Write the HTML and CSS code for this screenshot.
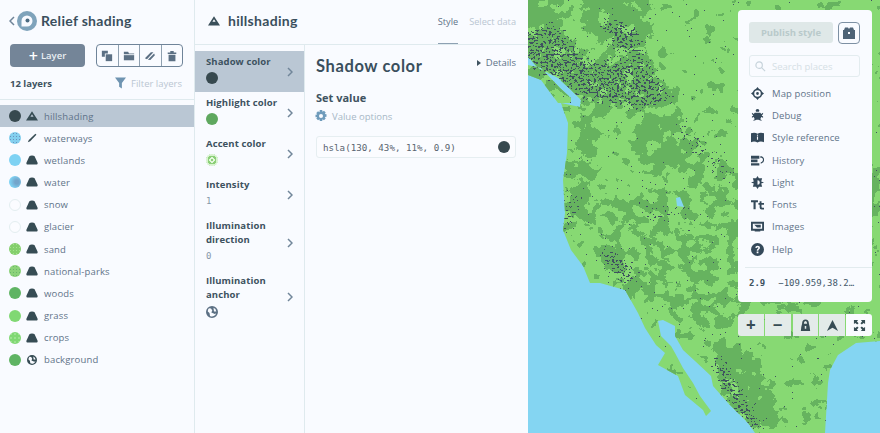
FILE: index.html
```html
<!DOCTYPE html>
<html lang="en">
<head>
<meta charset="utf-8">
<title>Relief shading</title>
<link rel="stylesheet" href="styles.css">
</head>
<body>
<svg class="defs" width="0" height="0" aria-hidden="true">
  <symbol id="hill" viewBox="0 0 12 10"><path d="M3.400 1.200Q4 .4 6 .4t2.600.8l3 6.600Q12 9.400 10.800 9.400H1.200Q0 9.400.4 7.800z"/></symbol>
  <symbol id="hill2" viewBox="0 0 12 10"><path d="M6 .3l6 9.200H0zM6 3.200L4.400 5.700h3.200z" fill-rule="evenodd"/></symbol>
  <symbol id="line" viewBox="0 0 12 12"><path d="M10 .8l1.300 1.300-7.500 7.800-2.800 1.300 1.200-2.800z"/></symbol>
  <symbol id="globe" viewBox="0 0 12 12"><path fill-rule="evenodd" d="M6 0a6 6 0 1 0 0 12A6 6 0 0 0 6 0zM3 2.200l2 .3 1.300 2-1 2 3.500 1.500 1.400-.7A4.300 4.300 0 0 1 4 9.900L3.500 7 1.800 5.500A4.300 4.300 0 0 1 3 2.200zm4.500-.4a4.300 4.300 0 0 1 2.800 3.600L8 5.500z"/></symbol>
</svg>
<div class="app">
  <aside class="sidebar">
    <header class="brand">
      <svg class="back" viewBox="0 0 6 10"><path d="M5 1L1 5l4 4"/></svg>
      <svg class="logo" viewBox="0 0 20 20"><circle cx="10" cy="10" r="10" fill="#7fa3bb"/><path d="M10 4.500a5.500 5.500 0 0 1 0 11H4.500V10A5.500 5.500 0 0 1 10 4.500z" fill="#f8faff"/><circle cx="10.500" cy="9.500" r="2" fill="#4a6a80"/></svg>
      <h1>Relief shading</h1>
    </header>
    <div class="toolbar">
      <button class="add-layer"><span class="plus">+</span>Layer</button>
      <div class="tools">
        <span class="tool"><svg viewBox="0 0 14 14"><path d="M1 1h7v3H4.500v4H1z"/><path d="M5.500 5H13v8H5.500z"/></svg></span>
        <span class="tool"><svg viewBox="0 0 14 14"><path d="M1 2h5l1 2h6v1H1z"/><path d="M1 6h12v6H1z"/></svg></span>
        <span class="tool"><svg viewBox="0 0 14 14"><path d="M1 9.500L8 2.500l3 .2L3.500 10.800zM4.500 11.500l7.300-7.500.9 2.200-5.300 5.500z"/></svg></span>
        <span class="tool"><svg viewBox="0 0 14 14"><path d="M2 3h10v1.800H2zM5 1.200h4V3H5zM3 5.500h8V13H3z"/></svg></span>
      </div>
    </div>
    <div class="counts">
      <strong>12 layers</strong>
      <span class="filter"><svg viewBox="0 0 12 12"><path d="M0 0h12L7.500 6v6l-3-1.800V6z"/></svg>Filter layers</span>
    </div>
    <ul class="layers">
      <li class="layer active"><i class="dot c-dark"></i><svg class="ico"><use href="#hill2"/></svg>hillshading</li>
      <li class="layer"><i class="dot c-stip"></i><svg class="ico"><use href="#line"/></svg>waterways</li>
      <li class="layer"><i class="dot c-blue"></i><svg class="ico"><use href="#hill"/></svg>wetlands</li>
      <li class="layer"><i class="dot c-blue2"></i><svg class="ico"><use href="#hill"/></svg>water</li>
      <li class="layer"><i class="dot c-white"></i><svg class="ico"><use href="#hill"/></svg>snow</li>
      <li class="layer"><i class="dot c-white"></i><svg class="ico"><use href="#hill"/></svg>glacier</li>
      <li class="layer"><i class="dot c-mottle"></i><svg class="ico"><use href="#hill"/></svg>sand</li>
      <li class="layer"><i class="dot c-mottle2"></i><svg class="ico"><use href="#hill"/></svg>national-parks</li>
      <li class="layer"><i class="dot c-green"></i><svg class="ico"><use href="#hill"/></svg>woods</li>
      <li class="layer"><i class="dot c-lime"></i><svg class="ico"><use href="#hill"/></svg>grass</li>
      <li class="layer"><i class="dot c-crop"></i><svg class="ico"><use href="#hill"/></svg>crops</li>
      <li class="layer"><i class="dot c-green"></i><svg class="ico"><use href="#globe"/></svg>background</li>
    </ul>
  </aside>

  <section class="editor">
    <header class="editor-head">
      <svg class="head-ico"><use href="#hill2"/></svg>
      <h2>hillshading</h2>
      <nav class="tabs"><span class="tab current">Style</span><span class="tab">Select data</span></nav>
    </header>
    <div class="editor-body">
      <ul class="props">
        <li class="prop selected"><div><b>Shadow color</b><i class="dot c-dark"></i></div><svg class="chev" viewBox="0 0 6 10"><path d="M1 1l4 4-4 4"/></svg></li>
        <li class="prop"><div><b>Highlight color</b><i class="dot c-green2"></i></div><svg class="chev" viewBox="0 0 6 10"><path d="M1 1l4 4-4 4"/></svg></li>
        <li class="prop"><div><b>Accent color</b><i class="dot c-ring"></i></div><svg class="chev" viewBox="0 0 6 10"><path d="M1 1l4 4-4 4"/></svg></li>
        <li class="prop"><div><b>Intensity</b><span class="num">1</span></div><svg class="chev" viewBox="0 0 6 10"><path d="M1 1l4 4-4 4"/></svg></li>
        <li class="prop"><div><b>Illumination direction</b><span class="num">0</span></div><svg class="chev" viewBox="0 0 6 10"><path d="M1 1l4 4-4 4"/></svg></li>
        <li class="prop"><div><b>Illumination anchor</b><svg class="anchor"><use href="#globe"/></svg></div><svg class="chev" viewBox="0 0 6 10"><path d="M1 1l4 4-4 4"/></svg></li>
      </ul>
      <div class="detail">
        <div class="detail-top"><h3>Shadow color</h3><span class="details"><i class="tri"></i>Details</span></div>
        <h4>Set value</h4>
        <div class="options"><svg viewBox="0 0 12 12"><path fill-rule="evenodd" d="M4.800 0h2.400l.3 1.700 1.500-.9 1.700 1.700-.9 1.500 1.700.3v2.400l-1.700.3.900 1.500-1.700 1.700-1.500-.9-.3 1.700H4.800l-.3-1.700-1.500.9-1.700-1.700.9-1.500L.5 7.200V4.800l1.700-.3-.9-1.500L3 1.300l1.500.9zM6 4a2 2 0 1 0 0 4 2 2 0 0 0 0-4z"/></svg>Value options</div>
        <div class="value"><code>hsla(130, 43%, 11%, 0.9)</code><i class="dot c-dark"></i></div>
      </div>
    </div>
  </section>

  <main class="map">
    <svg class="terrain" viewBox="0 0 352 433" preserveAspectRatio="none" aria-hidden="true">
      <defs>
        <clipPath id="land"><path clip-rule="evenodd" d="M0 0H352V341L328 343 310 355 302 370 300 383 297 433H227L220 423 200 403 185 386 183 376 167 361 155 350 147 336 147 326 135 320 130 321 133 336 143 346 147 353 155 368 165 383 172 396 183 411 178 416 175 410 157 395 150 376 130 365 137 353 128 345 117 328 110 313 97 290 72 283 62 283 55 266 43 250 35 230 37 213 35 180 39 153 40 123 33 103 52 107 53 100 43 90 30 78 10 68 0 57ZM0 65L13 68 32 88 43 98 43 103 30 103 13 80 0 75Z"/></clipPath>
        <filter id="patch" filterUnits="userSpaceOnUse" x="0" y="0" width="352" height="433" color-interpolation-filters="sRGB">
          <feGaussianBlur in="SourceGraphic" stdDeviation="5" result="b"/>
          <feTurbulence type="fractalNoise" baseFrequency=".085" numOctaves="4" seed="11"/>
          <feColorMatrix values="0 0 0 0 0 0 0 0 0 0 0 0 0 0 0 1 0 0 0 0" result="na"/>
          <feComposite in="na" in2="b" operator="arithmetic" k2="1" k3=".34"/>
          <feComponentTransfer result="t"><feFuncA type="discrete" tableValues="0 0 0 0 0 0 0 0 0 0 0 0 0 0 1 1 1 1 1 1"/></feComponentTransfer>
          <feFlood flood-color="#66b35f"/>
          <feComposite in2="t" operator="in"/>
        </filter>
        <filter id="speck" filterUnits="userSpaceOnUse" x="0" y="0" width="352" height="433" color-interpolation-filters="sRGB">
          <feGaussianBlur in="SourceGraphic" stdDeviation="4" result="b"/>
          <feTurbulence type="fractalNoise" baseFrequency=".38 .5" numOctaves="2" seed="5"/>
          <feColorMatrix values="0 0 0 0 0 0 0 0 0 0 0 0 0 0 0 1 0 0 0 0" result="na"/>
          <feComposite in="na" in2="b" operator="arithmetic" k2="1" k3=".24"/>
          <feComponentTransfer result="t"><feFuncA type="discrete" tableValues="0 0 0 0 0 0 0 0 0 0 0 0 0 0 0 0 1 1 1 1"/></feComponentTransfer>
          <feFlood flood-color="#3f5260"/>
          <feComposite in2="t" operator="in"/>
        </filter>
      </defs>
      <rect class="water" width="352" height="433"/>
      <g clip-path="url(#land)">
        <rect class="grass" width="352" height="433"/>
        <g filter="url(#patch)">
          <path class="d100" d="M-10 30L30 20 60 60 120 55 150 100 120 115 60 105 20 85-10 60ZM-10-10H35V30L10 45-10 40ZM55-10H125V20L115 60 75 50 55 25ZM55 105L72 110 68 170 60 225 40 225 45 170ZM70 225L100 265 125 300 100 295 70 255ZM185 340L225 350 265 433H215L190 385ZM110 110L150 115 155 170 125 180 105 150Z"/>
          <path class="d50" d="M60 190H210V270L225 330H170L130 300 80 240ZM150 100L205 170 270 165 352 180 352 250 280 320H230L200 220 150 190ZM-10 60L35 100 42 200 60 230H30Z"/>
          <path class="d25" d="M130 365L185 415 165 370ZM0 40H45L70 100H0ZM120 300L160 350 190 340 170 300ZM280 395L310 395 318 433H285Z"/>
          <path class="d10" d="M130 0H352V170L200 150ZM240 330H352V433H290Z"/>
        </g>
        <g filter="url(#speck)">
          <path class="d100" d="M-10 30L30 25 60 60 120 60 145 100 115 110 60 100 20 80-10 55ZM70 15L110 25 118 60 85 50ZM78 245L112 272 100 288 72 258ZM190 350L235 425 218 430 185 370Z"/>
          <path class="d50" d="M150 110L210 175 205 185 150 140ZM70 280L105 295 90 300ZM110 200L190 215 120 225ZM0 200L60 190 45 230 0 240Z"/>
        </g>
      </g>
      <path class="water" d="M152 197L156 207 149 206 148 198Z"/>
    </svg>

    <aside class="panel">
      <div class="publish-row">
        <button class="publish">Publish style</button>
        <span class="gift"><svg viewBox="0 0 14 14"><path d="M3 1.500h3L7 3l1-1.500h3L12 4h1v9H1V4h1z"/><rect x="6" y="6" width="2" height="2" fill="#f8faff"/></svg></span>
      </div>
      <label class="search"><svg viewBox="0 0 12 12"><circle cx="4.500" cy="4.500" r="3.500"/><path d="M7.500 7.500L11 11"/></svg><span>Search places</span></label>
      <ul class="menu">
        <li><svg viewBox="0 0 14 14"><path fill-rule="evenodd" d="M7 0l1.500 2A5 5 0 0 1 12 5.500L14 7l-2 1.500A5 5 0 0 1 8.500 12L7 14l-1.500-2A5 5 0 0 1 2 8.500L0 7l2-1.500A5 5 0 0 1 5.500 2zM7 3.500a3.500 3.500 0 1 0 0 7 3.500 3.500 0 0 0 0-7zM7 5.500a1.500 1.500 0 1 1 0 3 1.500 1.500 0 0 1 0-3z"/></svg>Map position</li>
        <li><svg viewBox="0 0 14 14"><path d="M5 2a2 2 0 0 1 4 0l-.5 1h-3zM4 4h6l1 1.500L13 4v1.500L11.500 7 13 8v1.500l-2-1L10 11l2 1.500H10L8 11.500H6L4 12.500H2L4 11 3 8.500l-2 1V8l1.500-1L1 5.500V4l2 1.500z"/></svg>Debug</li>
        <li><svg viewBox="0 0 14 14"><path fill-rule="evenodd" d="M0 2.500Q4 1 7 3q3-2 7-.5V12q-4-1.500-7 .5-3-2-7-.5zM6.400 6v3.500h1.200V6zM6.400 4v1.200h1.200V4z"/></svg>Style reference</li>
        <li><svg viewBox="0 0 14 14"><path d="M0 2h9v3H0zM0 6h7v3H0zM0 10h9v2.500H0zM10 2.500h1.500A4 4 0 0 1 11.500 10l-1 .5V9l1-.5a2.500 2.500 0 0 0 0-4.500h-1.500z"/></svg>History</li>
        <li><svg viewBox="0 0 14 14"><path fill-rule="evenodd" d="M7 0l1.500 2.500H12L11 6l3 1-3 1 1 3.500H8.500L7 14l-1.500-2.500H2L3 8 0 7l3-1-1-3.500h3.500zM7 4.500v5a2.500 2.500 0 0 0 0-5z"/></svg>Light</li>
        <li><svg viewBox="0 0 14 14"><path d="M0 2.500h7.500v2H5V12H2.700V4.500H0zM8 5.500h1.300V3.500h2v2H14v1.800h-2.700v2.500q0 .8 1.100.8H14V12.500h-2.500q-2.200 0-2.200-2.300V7.300H8z"/></svg>Fonts</li>
        <li><svg viewBox="0 0 14 14"><path fill-rule="evenodd" d="M0 2h14v9.500H10v1H4v-1H0zM2 4v5.500h10V4zM3.500 5.200h7v3h-4z"/></svg>Images</li>
        <li><svg viewBox="0 0 14 14"><path fill-rule="evenodd" d="M7 0a7 7 0 1 0 0 14A7 7 0 0 0 7 0zM4.500 5.200Q4.800 3 7.200 3 9.700 3.200 9.700 5.200 9.700 6.500 8.300 7.200 7.900 7.400 7.900 8.300H6.200Q6.100 6.700 7.300 6.100 7.900 5.800 7.900 5.200 7.800 4.600 7.100 4.600 6.400 4.700 6.300 5.400zM6.100 9.200h1.900V11H6.100z"/></svg>Help</li>
      </ul>
      <div class="coords"><code>2.9</code><code>−109.959,38.2…</code></div>
    </aside>

    <div class="controls">
      <span class="ctl">+</span>
      <span class="ctl minus">−</span>
      <span class="ctl gap"><svg viewBox="0 0 14 14"><path fill-rule="evenodd" d="M7 .5q3.500 0 3.700 4.500 1.300 4 1.300 8H2q0-4 1.300-8Q3.500.5 7 .5zM5.200 5h3.600Q8.700 2.200 7 2.200T5.200 5zM6.200 7.500v3h1.600v-3z"/></svg></span>
      <span class="ctl"><svg viewBox="0 0 14 14"><path d="M7 1l6 12-6-3.500L1 13z"/></svg></span>
      <span class="ctl on"><svg viewBox="0 0 14 14"><path d="M1 1h4.500L4.200 2.600 6 4.500 4.500 6 2.600 4.200 1 5.500zM13 1v4.500l-1.600-1.300L9.500 6 8 4.500l1.800-1.900L8.500 1zM1 13V8.500l1.600 1.300L4.500 8 6 9.500l-1.800 1.900L5.500 13zM13 13H8.500l1.300-1.600L8 9.500 9.500 8l1.900 1.800L13 8.500z"/></svg></span>
    </div>
  </main>
</div>
</body>
</html>
```
FILE: styles.css
```css
* { box-sizing: border-box; margin: 0; padding: 0; }
html, body { width: 880px; height: 433px; overflow: hidden; }
body { font-family: "Open Sans", sans-serif; color: #5b6f86; background: #f9fbff; }
ul { list-style: none; }
i { display: block; font-style: normal; }
.defs { position: absolute; }
code { font-family: "DejaVu Sans Mono", monospace; }

.app { display: flex; height: 433px; }

/* left sidebar */
.sidebar { width: 195px; flex: none; border-right: 1px solid #dfeaee; background: #f9fbff; }
.brand { height: 44px; display: flex; align-items: center; padding: 0 0 3px 9px; }
.back { width: 6px; height: 10px; fill: none; stroke: #6f8397; stroke-width: 1.500; }
.logo { width: 20px; height: 20px; margin: 0 4px 0 2px; }
.brand h1 { font: 700 14px/20px Lato, sans-serif; letter-spacing: .3px; color: #3a4f5d; }
.toolbar { display: flex; align-items: center; padding: 0 11px 0 10px; justify-content: space-between; height: 23px; }
.add-layer { width: 75px; height: 23px; border: 0; border-radius: 4px; background: #748598; color: #e9eef3; font: 600 9.500px "Open Sans", sans-serif; display: flex; align-items: center; justify-content: center; }
.plus { font-size: 16px; line-height: 14px; font-weight: 600; color: #fff; margin-right: 3px; }
.tools { display: flex; width: 87px; height: 23px; border: 1px solid #6f8499; border-radius: 4px; }
.tool { flex: 1; display: flex; align-items: center; justify-content: center; border-left: 1px solid #8fa0b0; }
.tool:first-child { border-left: 0; }
.tool svg { width: 12px; height: 12px; fill: #5c7084; }
.counts { display: flex; justify-content: space-between; align-items: center; padding: 0 12px 0 10px; height: 33px; border-bottom: 1px solid #dfeaee; }
.counts strong { font-size: 9.500px; font-weight: 700; color: #3f5361; }
.filter { display: flex; align-items: center; font-size: 9.500px; color: #b9c6d2; }
.filter svg { width: 11px; height: 12px; margin-right: 5px; fill: #6f94b1; }
.layers { padding-top: 5px; }
.layer { height: 22.200px; display: flex; align-items: center; padding-left: 9px; font-size: 9.500px; letter-spacing: .15px; color: #5f7389; }
.layer.active { background: #bac7d4; height: 22px; }
.dot { width: 12px; height: 12px; border-radius: 50%; flex: none; }
.ico { width: 12px; height: 10px; margin: 0 6px 0 5px; fill: #364c54; flex: none; }
.c-dark { background: #37494f; }
.c-stip { background: #84cfee; background-image: radial-gradient(#6b93bd 30%, transparent 45%); background-size: 3px 3px; }
.c-blue { background: #7ed2f3; }
.c-blue2 { background: radial-gradient(circle at 65% 50%, #74a5cb 20%, #7ed2f3 70%); }
.c-white { background: #fbfcff; border: 1px solid #e3eef0; }
.c-mottle { background: #84cf6c; background-image: radial-gradient(#a3e28e 35%, transparent 45%); background-size: 3px 3px; }
.c-mottle2 { background: #8cd279; background-image: radial-gradient(#6ab76a 35%, transparent 45%); background-size: 3px 3px; }
.c-green { background: #5fb463; }
.c-lime { background: #80d873; }
.c-crop { background: #80d873; background-image: radial-gradient(#d4f3cb 15%, transparent 30%); background-size: 4px 4px; }
.c-green2 { background: #5fa85f; }
.c-ring { background: radial-gradient(circle, #8ccf78 0 18%, #e3f6dc 18% 34%, #8ccf78 34% 52%, #d6f2cd 52% 68%, #8ccf78 68%); }

/* middle editor */
.editor { width: 333px; flex: none; display: flex; flex-direction: column; }
.editor-head { height: 45px; display: flex; align-items: center; padding: 0 12px 0 13px; border-bottom: 1px solid #dfeaee; }
.head-ico { width: 12px; height: 10px; fill: #3a4f5a; margin: 0 8px 3px 0; }
.editor-head h2 { font: 700 14px/20px Lato, sans-serif; letter-spacing: .3px; color: #3a4f5d; margin-bottom: 3px; }
.tabs { margin-left: auto; display: flex; gap: 11px; align-self: flex-end; height: 31px; }
.tab { font-size: 9.200px; color: #b9c6d2; line-height: 18px; }
.tab.current { color: #5f7389; border-bottom: 1px solid #8ea1b3; height: 31px; margin-bottom: -1px; }
.editor-body { flex: 1; display: flex; }
.props { width: 110px; flex: none; padding-top: 6px; border-right: 1px solid #dfeaee; }
.prop { display: flex; align-items: center; justify-content: space-between; padding: 4px 11px; }
.prop.selected { background: #bac7d4; }
.prop b { display: block; font-size: 9.500px; line-height: 14px; font-weight: 700; color: #3d5260; letter-spacing: .1px; }
.prop .dot { margin-top: 3px; }
.prop > div { width: 78px; min-height: 33px; }
.num { display: block; font: 9px/19px "DejaVu Sans Mono", monospace; color: #8698a9; }
.anchor { display: block; width: 12px; height: 12px; margin-top: 4px; margin-bottom: 1px; fill: #5c7084; }
.chev { width: 6px; height: 10px; fill: none; stroke: #71869a; stroke-width: 1.500; flex: none; }
.detail { flex: 1; padding: 10px 12px 0 11px; }
.detail-top { display: flex; justify-content: space-between; align-items: flex-start; height: 33px; }
.detail-top h3 { font: 700 16.500px/22px Lato, sans-serif; letter-spacing: .6px; color: #3a4f5d; }
.details { display: flex; align-items: center; font-size: 9.500px; color: #5f7389; line-height: 16px; }
.tri { width: 0; height: 0; border-left: 4px solid #3f5361; border-top: 3px solid transparent; border-bottom: 3px solid transparent; margin-right: 5px; }
.detail h4 { font-size: 11px; line-height: 16px; font-weight: 700; color: #3f5361; margin-top: 2px; }
.options { display: flex; align-items: center; font-size: 9.500px; color: #a7b8c6; height: 20px; }
.options svg { width: 12px; height: 12px; margin: 0 5px 0 -1px; fill: #6e9bbb; }
.value { display: flex; align-items: center; justify-content: space-between; height: 22px; margin-top: 10px; padding: 0 5px 0 6px; border: 1px solid #e6eef1; border-radius: 3px; background: #fbfcff; }
.value code { font-size: 9.200px; color: #59646f; }

/* map */
.map { flex: 1; position: relative; overflow: hidden; background: #84d5f2; }
.terrain { position: absolute; inset: 0; width: 100%; height: 100%; display: block; }
.water { fill: #84d5f2; }
.grass { fill: #87d973; }
.d100 { fill: #fff; }
.d50 { fill: #fff; fill-opacity: .55; }
.d25 { fill: #fff; fill-opacity: .3; }
.d10 { fill: #fff; fill-opacity: .1; }

.panel { position: absolute; left: 210px; top: 10px; width: 134px; height: 292px; background: #f9fbff; border-radius: 4px; padding: 12px 12px 0 11px; }
.publish-row { display: flex; justify-content: space-between; }
.publish { width: 84px; height: 21px; border: 0; border-radius: 3px; background: #dfe8e8; color: #b9cacb; font: 700 9.500px "Open Sans", sans-serif; }
.gift { width: 22px; height: 22px; border: 1px solid #7d90a3; border-radius: 4px; display: flex; align-items: center; justify-content: center; }
.gift svg { width: 14px; height: 14px; fill: #4e6376; }
.search { display: flex; align-items: center; height: 22px; margin-top: 11px; border: 1px solid #e3ecef; border-radius: 3px; padding-left: 5px; font-size: 9.500px; color: #d5e0e5; }
.search svg { width: 11px; height: 11px; margin-right: 6px; fill: none; stroke: #c6d3db; stroke-width: 1.300; }
.menu { margin: 5px -12px 0 -4px; padding-bottom: 7px; border-bottom: 1px solid #e2ebee; }
.menu li { display: flex; align-items: center; height: 22.300px; font-size: 9.500px; letter-spacing: .1px; color: #5f7389; padding-left: 6px; }
.menu svg { width: 13px; height: 13px; margin-right: 8px; fill: #34495a; flex: none; }
.coords { display: flex; gap: 13px; margin-top: 10px; font-size: 9px; color: #44586a; }
.coords code:first-child { font-weight: 700; color: #3f5361; }

.controls { position: absolute; left: 210px; top: 314px; width: 134px; height: 22px; display: flex; }
.ctl { width: 26px; margin-right: 1px; display: flex; align-items: center; justify-content: center; background: #e3ebe9; font: 700 17px/20px "Open Sans", sans-serif; color: #364c54; }
.ctl:first-child { border-radius: 3px 0 0 3px; }
.ctl.gap { margin-left: 1px; }
.ctl.on { background: #f9fbff; border-radius: 0 3px 3px 0; margin-right: 0; }
.ctl svg { width: 13px; height: 13px; fill: #364c54; }
```
